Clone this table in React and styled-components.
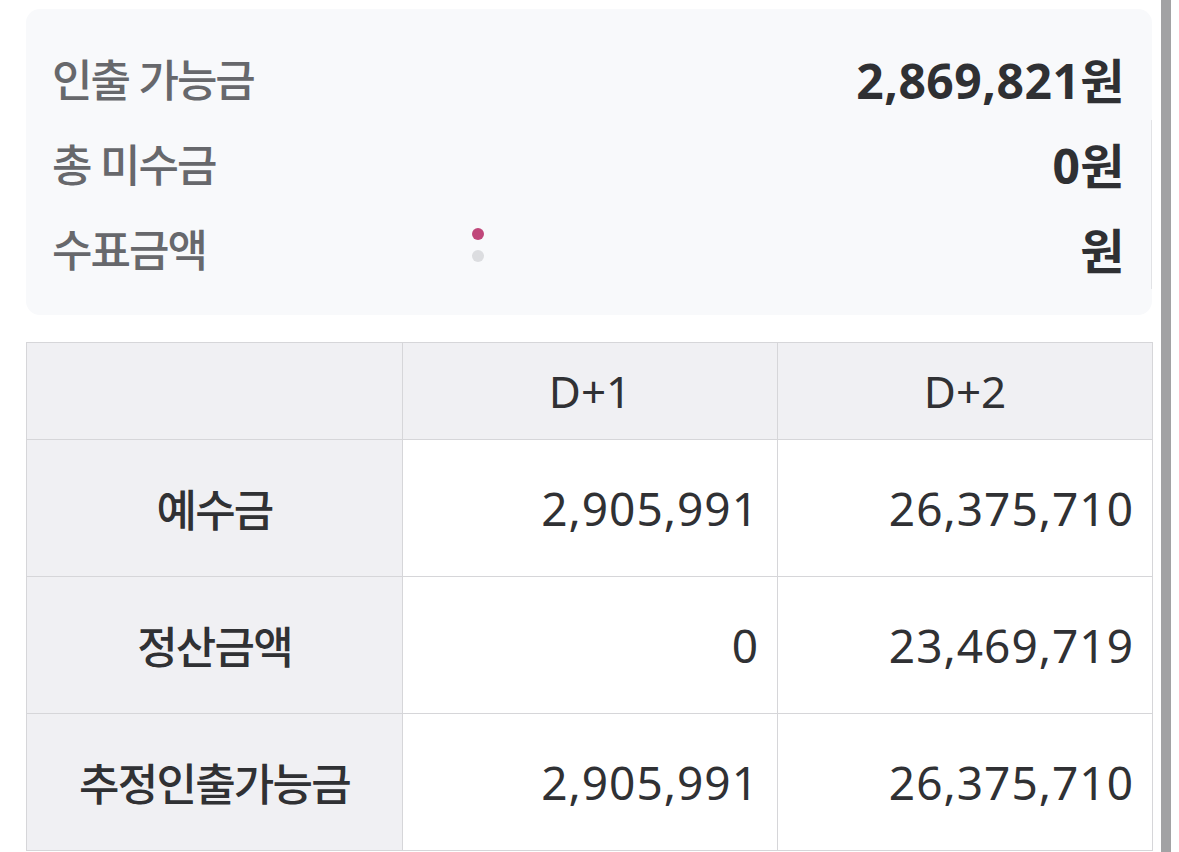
import styled, { createGlobalStyle } from 'styled-components';

const GlobalStyle = createGlobalStyle`
    html, body {
        margin: 0;
        padding: 0;
        background: #ffffff;
    }
    body {
        font-family: 'Noto Sans', 'Noto Sans CJK KR', sans-serif;
        color: #303134;
    }
`;

const summary = [
    { label: '인출 가능금', value: '2,869,821원' },
    { label: '총 미수금', value: '0원' },
    { label: '수표금액', value: '원', loading: true },
];

const rows = [
    { label: '예수금', d1: '2,905,991', d2: '26,375,710' },
    { label: '정산금액', d1: '0', d2: '23,469,719' },
    { label: '추정인출가능금', d1: '2,905,991', d2: '26,375,710' },
];

function App() {
    return (
        <Page>
            <GlobalStyle />
            <Content>
                <Summary>
                    {summary.map((item) => (
                        <SummaryRow key={item.label}>
                            <SummaryLabel>{item.label}</SummaryLabel>
                            <LoaderSlot>
                                {item.loading && (
                                    <Loader>
                                        <Dot $active />
                                        <Dot />
                                    </Loader>
                                )}
                            </LoaderSlot>
                            <SummaryValue>{item.value}</SummaryValue>
                        </SummaryRow>
                    ))}
                </Summary>

                <Table>
                    <colgroup>
                        <col style={{ width: '376px' }} />
                        <col style={{ width: '375px' }} />
                        <col style={{ width: '375px' }} />
                    </colgroup>
                    <thead>
                        <tr>
                            <HeadCell />
                            <HeadCell>D+1</HeadCell>
                            <HeadCell>D+2</HeadCell>
                        </tr>
                    </thead>
                    <tbody>
                        {rows.map((row) => (
                            <tr key={row.label}>
                                <RowLabel>{row.label}</RowLabel>
                                <NumCell>{row.d1}</NumCell>
                                <NumCell>{row.d2}</NumCell>
                            </tr>
                        ))}
                    </tbody>
                </Table>
            </Content>
            <ScrollTrack />
        </Page>
    );
}

export default App;

const Page = styled.div`
    display: flex;
    align-items: flex-start;
    width: 1179px;
    height: 852px;
    overflow: hidden;
`;

const Content = styled.div`
    width: 1127px;
    margin-left: 26px;
    padding-top: 9px;
    display: flex;
    flex-direction: column;
    gap: 27px;
`;

const Summary = styled.div`
    position: relative;
    box-sizing: border-box;
    width: 1126px;
    height: 306px;
    padding: 26px 27px 0 26px;
    background: #f8f9fb;
    border-radius: 14px;

    &::after {
        content: '';
        position: absolute;
        right: 0;
        top: 111px;
        width: 1px;
        height: 169px;
        background: #e2e3e6;
    }
`;

const SummaryRow = styled.div`
    display: grid;
    grid-template-columns: 420px 12px 1fr;
    align-items: center;
    height: 85px;
`;

const SummaryLabel = styled.span`
    font-size: 44px;
    font-weight: 500;
    color: #67686c;
    letter-spacing: -2px;
`;

const LoaderSlot = styled.div`
    display: flex;
    justify-content: center;
`;

const Loader = styled.div`
    display: flex;
    flex-direction: column;
    gap: 10px;
    margin-top: -6px;
`;

const Dot = styled.span`
    width: 12px;
    height: 12px;
    border-radius: 50%;
    background: ${(p) => (p.$active ? '#c0477a' : '#dcdde0')};
`;

const SummaryValue = styled.span`
    justify-self: end;
    font-size: 48px;
    font-weight: 700;
    color: #2f3033;
    letter-spacing: 0.5px;
`;

const Table = styled.table`
    width: 1127px;
    border-collapse: collapse;
    table-layout: fixed;

    td, th {
        border: 1px solid #d6d6d9;
        padding: 0;
    }
`;

const HeadCell = styled.th`
    height: 96px;
    background: #f0f0f3;
    font-size: 44px;
    font-weight: 400;
    color: #303134;
    text-align: center;
`;

const RowLabel = styled.td`
    height: 136px;
    background: #f0f0f3;
    font-size: 44px;
    font-weight: 500;
    color: #303134;
    text-align: center;
    letter-spacing: -1.8px;
`;

const NumCell = styled.td`
    height: 136px;
    padding-right: 18px !important;
    font-size: 46px;
    font-weight: 400;
    color: #303134;
    text-align: right;
    letter-spacing: 1px;
`;

const ScrollTrack = styled.div`
    width: 10px;
    height: 852px;
    margin-left: 8px;
    background: #a2a2a4;
`;
